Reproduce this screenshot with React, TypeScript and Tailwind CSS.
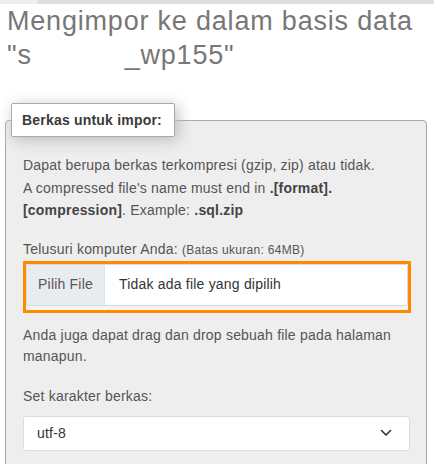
import React from "react";

const font = { fontFamily: '"Liberation Sans", Arial, sans-serif' };

export default function App() {
  return (
    <div className="w-[434px] h-[464px] overflow-hidden bg-white text-[#444]" style={font}>
      {/* bottom edge of the bar above */}
      <div className="h-[4px] bg-[#dedede] flex">
        <div className="w-[38px] h-full bg-[#efefef] rounded-br-[6px]" />
      </div>

      <div className="px-[5px]">
        <h2 className="pl-[2px] text-[27px] leading-[34px] tracking-[0.8px] text-[#777]">
          Mengimpor ke dalam basis data
          <br />
          "s<span className="inline-block w-[93px]" />_wp155"
        </h2>

        <fieldset className="mt-[31px] w-[422px] border border-[#aaa] rounded-t-[4px] bg-[#eee] pl-[17px] pr-[15px] pb-6 text-[14px] tracking-[0.2px]">
          <legend className="-ml-[12px] bg-white border border-[#aaa] rounded-[2px] shadow-[3px_3px_15px_#bbb] pl-[10px] pr-[12px] py-[5px] font-bold leading-[22px] text-[#3a3a3a]">
            Berkas untuk impor:
          </legend>

          <p className="mt-[17px] leading-[22.5px] text-[#555]">
            Dapat berupa berkas terkompresi (gzip, zip) atau tidak.
            <br />
            A compressed file's name must end in <b className="text-[#444]">.[format].</b>
            <br />
            <b className="text-[#444]">[compression]</b>. Example: <b className="text-[#444]">.sql.zip</b>
          </p>

          <div className="mt-[17px] leading-[20px] text-[#555]">
            Telusuri komputer Anda: <span className="text-[12px] tracking-[0.3px]">(Batas ukuran: 64MB)</span>
          </div>

          <div className="mt-[1px] border-[3px] border-[#ff8a00] pb-[4px] bg-[#f4f4f4]">
            <div className="h-[42px] flex border border-[#d8dbde] rounded-[2px] bg-white">
              <div className="w-[78px] flex items-center justify-center bg-[#e9ecef] border-r border-[#dee2e6] text-[#555]">
                Pilih File
              </div>
              <div className="flex items-center pl-[14px] text-[#333]">Tidak ada file yang dipilih</div>
            </div>
          </div>

          <p className="mt-[12px] leading-[21px] text-[#555]">
            Anda juga dapat drag dan drop sebuah file pada halaman
            <br />
            manapun.
          </p>

          <div className="mt-[18px] leading-[22px] text-[#555]">Set karakter berkas:</div>

          <div className="mt-[9px] h-[35px] w-[387px] flex items-center justify-between bg-white border border-[#dcdcdc] rounded-[3px] pl-[13px] pr-[17px] text-[#333]">
            <span>utf-8</span>
            <svg width="12" height="8" viewBox="0 0 12 8" fill="none">
              <path d="M1.5 1.5 6 6l4.5-4.5" stroke="#333" strokeWidth="1.6" strokeLinecap="round" strokeLinejoin="round" />
            </svg>
          </div>
        </fieldset>
      </div>
    </div>
  );
}
